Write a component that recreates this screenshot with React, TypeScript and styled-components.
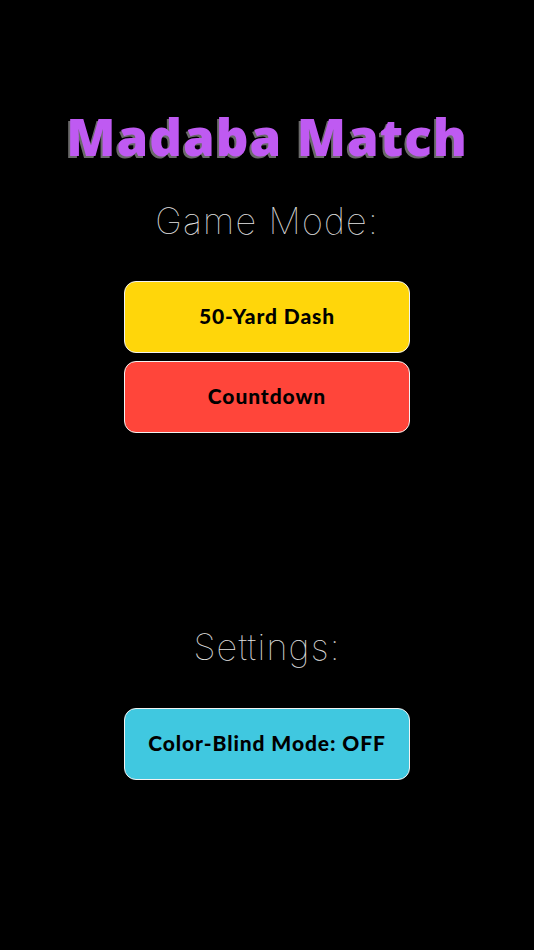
import styled, { createGlobalStyle } from 'styled-components';

const GlobalStyle = createGlobalStyle`
  html, body {
    margin: 0;
    padding: 0;
    background: #000;
  }
`;

const modes = [
  { label: '50-Yard Dash', color: '#ffd60a' },
  { label: 'Countdown', color: '#ff453a' },
];

export default function App() {
  return (
    <>
      <GlobalStyle />
      <Screen>
        <Title>Madaba Match</Title>
        <SectionLabel>Game Mode:</SectionLabel>
        <ButtonStack $gapTop={40}>
          {modes.map((m) => (
            <MenuButton key={m.label} $bg={m.color}>
              {m.label}
            </MenuButton>
          ))}
        </ButtonStack>
        <SettingsLabel>Settings:</SettingsLabel>
        <ButtonStack $gapTop={41}>
          <MenuButton $bg="#40c8e0">Color-Blind Mode: OFF</MenuButton>
        </ButtonStack>
      </Screen>
    </>
  );
}

const Screen = styled.div`
  width: 534px;
  height: 950px;
  background: #000;
  display: flex;
  flex-direction: column;
  align-items: center;
  overflow: hidden;
`;

const Title = styled.h1`
  margin: 0;
  padding-top: 109px;
  font-family: 'Open Sans', sans-serif;
  font-weight: 800;
  font-size: 51px;
  line-height: 54px;
  letter-spacing: 1px;
  color: #bf5af2;
  text-shadow: -2px 2px 0 #6a6a6a;
`;

const SectionLabel = styled.div`
  margin-top: 38px;
  font-family: Inter, Lato, sans-serif;
  font-weight: 100;
  font-size: 36px;
  line-height: 40px;
  letter-spacing: 1.2px;
  color: #e4e4e4;
`;

const SettingsLabel = styled(SectionLabel)`
  margin-top: 194px;
`;

const ButtonStack = styled.div<{ $gapTop: number }>`
  margin-top: ${(p) => p.$gapTop}px;
  display: flex;
  flex-direction: column;
  gap: 8px;
`;

const MenuButton = styled.button<{ $bg: string }>`
  width: 286px;
  height: 72px;
  box-sizing: border-box;
  border: 1.5px solid #f2f2f2;
  border-radius: 12px;
  background: ${(p) => p.$bg};
  color: #000;
  font-family: Lato, sans-serif;
  font-weight: 900;
  font-size: 21px;
  letter-spacing: 0.9px;
  padding: 0 0 3px;
  cursor: pointer;
`;
